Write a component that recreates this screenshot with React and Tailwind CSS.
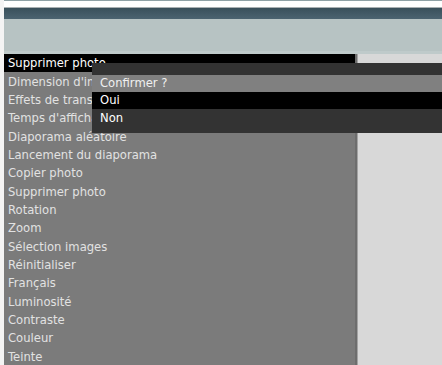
const menuItems = [
  "Supprimer photo",
  "Dimension d'image",
  "Effets de transition",
  "Temps d'affichage",
  "Diaporama aléatoire",
  "Lancement du diaporama",
  "Copier photo",
  "Supprimer photo",
  "Rotation",
  "Zoom",
  "Sélection images",
  "Réinitialiser",
  "Français",
  "Luminosité",
  "Contraste",
  "Couleur",
  "Teinte",
];

const App = () => {
  return (
    <div className="relative w-[442px] h-[365px] overflow-hidden bg-[#f4f4f4] pl-1 flex flex-col font-['DejaVu_Sans',sans-serif] text-[11.6px]">
      {/* top header */}
      <div className="h-px bg-[#8fa2a6]" />
      <div className="h-[6px] bg-white" />
      <div className="h-px bg-[#a9b0b2]" />
      <div className="h-[11px] bg-gradient-to-b from-[#3a505b] to-[#4b6370]" />
      <div className="h-[32px] bg-[#b7c3c3]" />
      <div className="h-[3px] bg-[#bfcaca]" />

      {/* menu + side */}
      <div className="flex flex-1 min-h-0">
        <div className="w-[351px] bg-[#7b7b7b] flex flex-col">
          {menuItems.map((item, i) => (
            <div
              key={i}
              className={`h-[18.33px] shrink-0 flex items-center pl-1 pt-[2px] whitespace-nowrap ${
                i === 0 ? "bg-black text-white" : "text-[#e2e2e2]"
              }`}
            >
              {item}
            </div>
          ))}
        </div>
        <div className="w-[2px] bg-[#6d6d6d]" />
        <div className="w-px bg-[#a3a3a3]" />
        <div className="flex-1 bg-[#d8d8d8]" />
      </div>

      {/* confirm dialog */}
      <div className="absolute left-[92px] right-0 top-[63px] h-[70px] bg-[#333333] pt-[12px] text-white">
        <div className="h-[16.7px] bg-[#808080] flex items-center px-2 pt-[1px] text-[#f0f0f0]">Confirmer ?</div>
        <div className="h-[17.6px] bg-black flex items-center px-2 pt-[1px]">Oui</div>
        <div className="h-[17px] flex items-center px-2 pt-[1px]">Non</div>
      </div>
    </div>
  );
};

export default App;
